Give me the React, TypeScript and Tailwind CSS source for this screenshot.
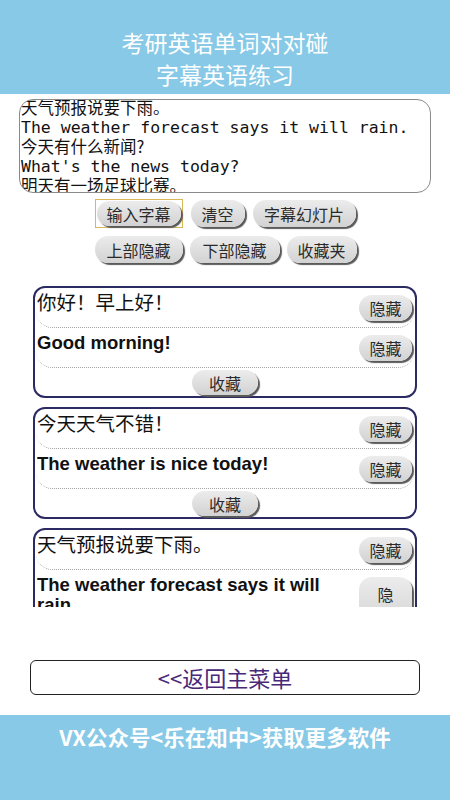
import React from "react";

const cjk = '"Noto Sans CJK SC", "Noto Sans", sans-serif';
const en = '"Liberation Sans", Arial, "Noto Sans CJK SC", sans-serif';
const mono = '"DejaVu Sans Mono", "Liberation Mono", "Noto Sans CJK SC", monospace';

function GBtn({ children, className = "" }: { children: React.ReactNode; className?: string }) {
  return (
    <div
      className={
        "flex items-center justify-center rounded-[13px] bg-gradient-to-b from-[#ececec] to-[#d2d2d2] text-[#2a2a2a] shadow-[2px_2px_1px_#5a5a5a] " +
        className
      }
      style={{ fontFamily: cjk }}
    >
      {children}
    </div>
  );
}

function Row({
  text,
  english,
  tall,
}: {
  text: string;
  english?: boolean;
  tall?: boolean;
}) {
  return (
    <div className="mx-[1px] flex items-start rounded-b-[16px] border-b border-dotted border-[#a8a8a8]">
      <div
        className={
          english
            ? "flex-1 pl-[1px] pt-[5px] pb-[14px] text-[18.5px] font-bold leading-[20px] text-[#111]"
            : "flex-1 pl-[1px] pt-[2px] pb-[13px] text-[19.5px] leading-[24px] text-[#111]"
        }
        style={{ fontFamily: english ? en : cjk }}
      >
        {text}
      </div>
      {tall ? (
        <GBtn className="mr-[2px] ml-[4px] mt-[7px] h-[54px] w-[53px] shrink-0 flex-col text-[16px] leading-[20px]">
          <span>隐</span>
          <span>藏</span>
        </GBtn>
      ) : (
        <GBtn className="mr-[2px] ml-[4px] mt-[7px] h-[26px] w-[53px] shrink-0 text-[16px]">隐藏</GBtn>
      )}
    </div>
  );
}

function Card({ zh, enText, tall }: { zh: string; enText: string; tall?: boolean }) {
  return (
    <div className="w-[384px] shrink-0 rounded-[12px] border-2 border-[#2c2a62] bg-white">
      <Row text={zh} />
      <Row text={enText} english tall={tall} />
      <div className="flex h-[28px] items-start justify-center pt-[2px]">
        <GBtn className="h-[25px] w-[66px] text-[16px]">收藏</GBtn>
      </div>
    </div>
  );
}

export default function App() {
  return (
    <div className="flex h-[800px] w-[450px] flex-col overflow-hidden bg-white">
      <div
        className="h-[94px] shrink-0 bg-[#87c9e6] pt-[26px] text-center text-[23px] leading-[32px] text-white"
        style={{ fontFamily: cjk }}
      >
        <div>考研英语单词对对碰</div>
        <div>字幕英语练习</div>
      </div>

      <div className="mx-[19px] mt-[5px] h-[94px] shrink-0 overflow-hidden rounded-[14px] border border-[#8a8a8a] pl-[1px] text-[16.5px] leading-[19.5px] text-[#111]">
        <div className="-mt-[2px]">
          <div style={{ fontFamily: cjk }}>天气预报说要下雨。</div>
          <div className="whitespace-pre" style={{ fontFamily: mono }}>
            The weather forecast says it will rain.
          </div>
          <div style={{ fontFamily: cjk }}>今天有什么新闻?</div>
          <div className="whitespace-pre" style={{ fontFamily: mono }}>
            What's the news today?
          </div>
          <div style={{ fontFamily: cjk }}>明天有一场足球比赛。</div>
        </div>
      </div>

      <div className="mt-[6px] flex justify-center gap-[8px]">
        <div className="flex h-[29px] w-[88px] items-center justify-center border border-[#d9b65a]">
          <GBtn className="h-[25px] w-[84px] text-[16px]">输入字幕</GBtn>
        </div>
        <GBtn className="mt-[1px] h-[27px] w-[54px] text-[16px]">清空</GBtn>
        <GBtn className="mt-[1px] h-[27px] w-[103px] text-[16px]">字幕幻灯片</GBtn>
      </div>
      <div className="mt-[8px] flex justify-center gap-[7px] pl-[1px]">
        <GBtn className="h-[27px] w-[88px] text-[16px]">上部隐藏</GBtn>
        <GBtn className="h-[27px] w-[90px] text-[16px]">下部隐藏</GBtn>
        <GBtn className="h-[27px] w-[70px] text-[16px]">收藏夹</GBtn>
      </div>

      <div className="mt-[16px] flex h-[328px] shrink-0 flex-col items-center gap-[9px] overflow-hidden pt-[7px]">
        <Card zh="你好！早上好！" enText="Good morning!" />
        <Card zh="今天天气不错！" enText="The weather is nice today!" />
        <Card zh="天气预报说要下雨。" enText="The weather forecast says it will rain." tall />
      </div>

      <div
        className="mx-[30px] mt-[53px] flex h-[35px] shrink-0 items-center justify-center rounded-[6px] border border-[#222] text-[22px] text-[#4a2878]"
        style={{ fontFamily: cjk }}
      >
        &lt;&lt;返回主菜单
      </div>

      <div
        className="mt-[20px] flex-1 bg-[#87c9e6] pt-[7px] text-center text-[21.5px] font-bold leading-[30px] text-white"
        style={{ fontFamily: cjk }}
      >
        VX公众号&lt;乐在知中&gt;获取更多软件
      </div>
    </div>
  );
}
